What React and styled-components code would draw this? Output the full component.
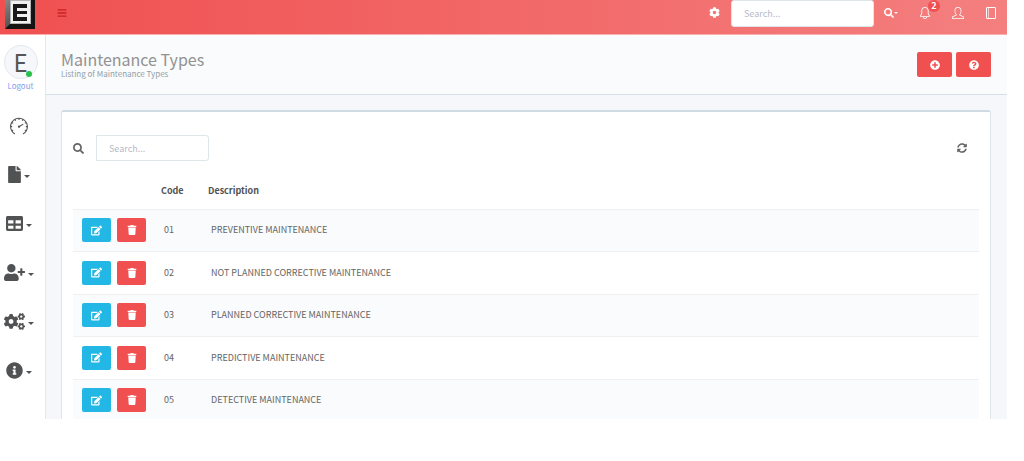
import React, { useState } from 'react'
import styled, { createGlobalStyle } from 'styled-components'
import {
  FaBars, FaCog, FaSearch, FaFile, FaTable, FaUserPlus, FaCogs, FaInfoCircle,
  FaPlusCircle, FaQuestionCircle, FaEdit, FaTrash, FaSyncAlt,
} from 'react-icons/fa'
import { SlBell, SlUser, SlSpeedometer } from 'react-icons/sl'

const types = [
  { code: '01', description: 'PREVENTIVE MAINTENANCE' },
  { code: '02', description: 'NOT PLANNED CORRECTIVE MAINTENANCE' },
  { code: '03', description: 'PLANNED CORRECTIVE MAINTENANCE' },
  { code: '04', description: 'PREDICTIVE MAINTENANCE' },
  { code: '05', description: 'DETECTIVE MAINTENANCE' },
]

const menu = [
  { label: 'Files', icon: FaFile, width: '13px' },
  { label: 'Tables', icon: FaTable, width: '17px' },
  { label: 'Users', icon: FaUserPlus, width: '21px' },
  { label: 'Settings', icon: FaCogs, width: '21px' },
  { label: 'Information', icon: FaInfoCircle, width: '17px' },
]

function Logo() {
  return (
    <svg width="30" height="29" viewBox="0 0 30 29" aria-hidden="true">
      <defs>
        <linearGradient id="bevel" x1="0" y1="0" x2="1" y2="1">
          <stop offset="0" stopColor="#8a8a8a" />
          <stop offset="0.6" stopColor="#4a4a4a" />
          <stop offset="1" stopColor="#111" />
        </linearGradient>
      </defs>
      <rect width="30" height="29" fill="url(#bevel)" />
      <path d="M30 0v29H0l5-5h21V0z" fill="#141414" />
      <rect x="5" y="0" width="21" height="24" fill="#b5b5b5" />
      <rect x="6" y="1" width="19" height="22" fill="#f0f0f0" />
      <path d="M8 4h14v4H12v3h10v3H12v3h10v4H8z" fill="#181818" />
    </svg>
  )
}

function NotebookIcon() {
  return (
    <svg width="10" height="12" viewBox="0 0 10 12" fill="none" stroke="currentColor" aria-hidden="true">
      <rect x="0.5" y="0.5" width="9" height="11" rx="0.5" />
      <path d="M2.5 1v10" strokeOpacity="0.6" />
    </svg>
  )
}

function TypeRow({ type }) {
  return (
    <tr>
      <td>
        <Actions>
          <ActionButton $color="#23b7e5" aria-label={`Edit ${type.code}`}>
            <FaEdit size={11} />
          </ActionButton>
          <ActionButton $color="#f05050" aria-label={`Delete ${type.code}`}>
            <FaTrash size={10} />
          </ActionButton>
        </Actions>
      </td>
      <td>{type.code}</td>
      <td>{type.description}</td>
    </tr>
  )
}

function App() {
  const [filter, setFilter] = useState('')
  const rows = types.filter((t) =>
    `${t.code} ${t.description}`.toLowerCase().includes(filter.toLowerCase())
  )

  return (
    <Page>
      <GlobalStyle />
      <TopBar>
        <Brand href="#" aria-label="Home"><Logo /></Brand>
        <MenuToggle aria-label="Toggle menu"><FaBars size={10} /></MenuToggle>
        <TopTools>
          <TopButton aria-label="Settings"><FaCog size={11} /></TopButton>
          <TopSearch type="text" placeholder="Search..." aria-label="Search" />
          <SearchButton aria-label="Run search">
            <FaSearch size={10} /><Caret $size="2px" />
          </SearchButton>
          <TopButton aria-label="Notifications">
            <SlBell size={12} />
            <Badge>2</Badge>
          </TopButton>
          <TopButton aria-label="Profile"><SlUser size={12} /></TopButton>
          <TopButton aria-label="Notebook"><NotebookIcon /></TopButton>
        </TopTools>
      </TopBar>

      <Body>
        <Sidebar>
          <Avatar>E<Status /></Avatar>
          <Logout href="#">Logout</Logout>
          <SideMenu>
            <SideButton $width="18px" aria-label="Dashboard"><SlSpeedometer size={18} /></SideButton>
            {menu.map(({ label, icon: Icon, width }) => (
              <SideButton key={label} $width={width} aria-label={label}>
                <Icon size={17} />
                <Caret $size="3px" />
              </SideButton>
            ))}
          </SideMenu>
        </Sidebar>

        <Main>
          <Heading>
            <div>
              <Title>Maintenance Types</Title>
              <Subtitle>Listing of Maintenance Types</Subtitle>
            </div>
            <HeadingActions>
              <HeadingButton aria-label="Add"><FaPlusCircle size={10} /></HeadingButton>
              <HeadingButton aria-label="Help"><FaQuestionCircle size={10} /></HeadingButton>
            </HeadingActions>
          </Heading>

          <Card>
            <Filter>
              <FilterLabel htmlFor="filter" aria-label="Filter"><FaSearch size={11} /></FilterLabel>
              <FilterInput
                id="filter"
                type="text"
                placeholder="Search..."
                value={filter}
                onChange={(e) => setFilter(e.target.value)}
              />
              <Refresh aria-label="Refresh" onClick={() => setFilter('')}>
                <FaSyncAlt size={10} />
              </Refresh>
            </Filter>
            <Table>
              <thead>
                <tr>
                  <ActionHead aria-label="Actions" />
                  <CodeHead>Code</CodeHead>
                  <th>Description</th>
                </tr>
              </thead>
              <tbody>
                {rows.map((t) => <TypeRow key={t.code} type={t} />)}
              </tbody>
            </Table>
          </Card>
        </Main>
      </Body>
    </Page>
  )
}

export default App

const GlobalStyle = createGlobalStyle`
  * {
    box-sizing: border-box;
  }
  body {
    margin: 0;
    background: #fff;
    color: #656565;
    font-family: "Noto Sans CJK SC", "Open Sans", sans-serif;
    font-size: 9px;
    line-height: 14px;
  }
  button, input {
    font: inherit;
  }
  button {
    display: inline-flex;
    align-items: center;
    justify-content: center;
    padding: 0;
    border: 0;
    background: none;
    color: inherit;
    cursor: pointer;
  }
`

const Page = styled.div`
  display: flex;
  flex-direction: column;
  height: calc(100vh - 42px);
  margin-right: 17px;
  overflow: hidden;
`

const TopBar = styled.header`
  display: flex;
  flex-shrink: 0;
  align-items: flex-start;
  height: 35px;
  border-bottom: 1px solid #f9b0b0;
  background: linear-gradient(to right, #f05050, #f47f7f);
  color: #fff;
`

const Brand = styled.a`
  display: flex;
  width: 46px;
  padding: 0 5px;
`

const MenuToggle = styled.button`
  width: 32px;
  height: 26px;
  color: #c82020;
`

const TopTools = styled.div`
  display: flex;
  margin-left: auto;
`

const TopButton = styled.button`
  position: relative;
  width: 33px;
  height: 25px;
`

const SearchButton = styled.button`
  width: 34px;
  height: 25px;
`

const TopSearch = styled.input`
  width: 143px;
  height: 27px;
  padding: 0 12px;
  border: 1px solid #dde6e9;
  border-radius: 3px;
  color: #3a3f51;
  outline: 0;
  &::placeholder {
    color: #b7bac9;
  }
`

const Badge = styled.span`
  position: absolute;
  top: 0;
  right: 1px;
  width: 12px;
  height: 12px;
  border-radius: 6px;
  background: #f05050;
  font-size: 9px;
  font-weight: 700;
  line-height: 12px;
`

const Body = styled.div`
  display: flex;
  flex: 1;
  min-height: 0;
`

const Sidebar = styled.aside`
  display: flex;
  flex-direction: column;
  flex-shrink: 0;
  align-items: center;
  width: 46px;
  padding: 10px 4px 0 0;
  border-right: 1px solid #e4eaec;
`

const Avatar = styled.div`
  position: relative;
  width: 34px;
  height: 34px;
  border: 1px solid #e4e8ee;
  border-radius: 50%;
  background: #f5f7fa;
  color: #555;
  font-size: 24px;
  line-height: 32px;
  text-align: center;
`

const Status = styled.span`
  position: absolute;
  right: 5px;
  bottom: 1px;
  width: 6px;
  height: 6px;
  border-radius: 50%;
  background: #27c24c;
`

const Logout = styled.a`
  color: #7f9df0;
  font-size: 8px;
  text-decoration: none;
`

const SideMenu = styled.nav`
  display: flex;
  flex-direction: column;
  padding: 8px 3px 0 0;
`

const SideButton = styled.button`
  gap: 3px;
  height: 49px;
  color: #515253;
  svg {
    flex-shrink: 0;
    width: ${(props) => props.$width};
  }
`

const Caret = styled.span`
  margin-top: 4px;
  border: ${(props) => props.$size} solid transparent;
  border-top-color: currentColor;
  border-bottom: 0;
  ${SearchButton} & {
    margin-top: 1px;
  }
`

const Main = styled.main`
  flex: 1;
  min-width: 0;
  background: #f5f7fa;
`

const Heading = styled.div`
  display: flex;
  align-items: center;
  justify-content: space-between;
  height: 60px;
  padding: 0 16px 0 15px;
  border-bottom: 1px solid #d3e0e8;
  background: #fafbfc;
`

const Title = styled.h1`
  margin: 0;
  color: #929292;
  font-size: 16px;
  font-weight: 400;
  line-height: 18px;
`

const Subtitle = styled.small`
  display: block;
  color: #909fa7;
  font-size: 8px;
  line-height: 12px;
`

const HeadingActions = styled.div`
  display: flex;
  gap: 4px;
`

const HeadingButton = styled.button`
  width: 35px;
  height: 25px;
  border-radius: 2px;
  background: #f05050;
  color: #fff;
`

const Card = styled.section`
  margin: 15px 16px 0 15px;
  padding: 23px 11px 0;
  border: 1px solid #dde6e9;
  border-top: 2px solid #cfdbe2;
  border-radius: 3px;
  background: #fff;
`

const Filter = styled.div`
  display: flex;
  align-items: center;
`

const FilterLabel = styled.label`
  display: flex;
  width: 23px;
`

const FilterInput = styled.input`
  width: 113px;
  height: 26px;
  padding: 0 12px;
  border: 1px solid #dde6e9;
  border-radius: 0 3px 3px 0;
  color: #3a3f51;
  outline: 0;
  &::placeholder {
    color: #b7bac9;
  }
`

const Refresh = styled.button`
  margin-left: auto;
  margin-right: 12px;
`

const Table = styled.table`
  width: 100%;
  margin-top: 12px;
  border-collapse: collapse;
  table-layout: fixed;
  th {
    height: 36px;
    padding: 0 5px;
    color: #515253;
    font-weight: 700;
    text-align: left;
  }
  td {
    height: 42px;
    padding: 0 8px;
    border-top: 1px solid #eef0f2;
  }
  tbody tr:nth-child(odd) {
    background: #fafbfc;
  }
  tbody tr:nth-child(even) td {
    height: 43px;
  }
`

const ActionHead = styled.th`
  width: 83px;
`

const CodeHead = styled.th`
  width: 47px;
`

const Actions = styled.div`
  display: flex;
  gap: 6px;
  padding-left: 1px;
`

const ActionButton = styled.button`
  width: 29px;
  height: 24px;
  border-radius: 2px;
  background: ${(props) => props.$color};
  color: #fff;
`
